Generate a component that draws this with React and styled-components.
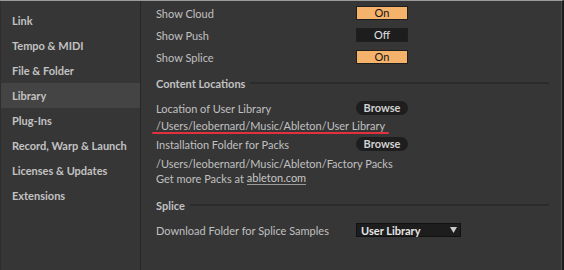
import React from "react";
import styled, { createGlobalStyle } from "styled-components";

const GlobalStyle = createGlobalStyle`
  html, body {
    margin: 0;
    padding: 0;
    background: #363636;
  }
  body {
    font-family: Lato, "Noto Sans", sans-serif;
    font-size: 11px;
    -webkit-font-smoothing: antialiased;
  }
`;

const Window = styled.div`
  width: 564px;
  height: 270px;
  box-sizing: border-box;
  display: flex;
  background: #363636;
  border-top: 1px solid #9a9a9a;
  border-right: 2px solid #1c1c1c;
  box-shadow: inset -1px 0 0 #4a4a4a;
  overflow: hidden;
`;

const Sidebar = styled.nav`
  width: 141px;
  flex: none;
  padding-top: 7px;
  border-right: 1px solid #272727;
  border-left: 1px solid #2e2e2e;
  box-sizing: border-box;
`;

const NavItem = styled.div`
  height: 25px;
  line-height: 25px;
  padding-left: 11px;
  font-weight: 700;
  color: #c2c2c2;
  background: ${(p) => (p.$active ? "#444444" : "transparent")};
  white-space: nowrap;
`;

const Content = styled.main`
  flex: 1;
  padding: 1px 13px 0 15px;
  display: flex;
  flex-direction: column;
  color: #c0c0c0;
`;

const Row = styled.div`
  height: ${(p) => p.$h || 22}px;
  display: grid;
  grid-template-columns: 200px auto;
  align-items: center;
  white-space: nowrap;
`;

const TextRow = styled.div`
  height: ${(p) => p.$h || 16}px;
  display: flex;
  align-items: center;
  white-space: nowrap;
`;

const SectionHeader = styled.div`
  height: ${(p) => p.$h}px;
  margin-top: ${(p) => p.$mt || 0}px;
  display: flex;
  align-items: center;
  gap: 5px;
  font-weight: 700;
  color: #c2c2c2;

  &::after {
    content: "";
    flex: 1;
    height: 2px;
    margin-top: -1px;
    background: #2b2b2b;
  }
`;

const Toggle = styled.div`
  width: 50px;
  height: 12px;
  line-height: 12px;
  text-align: center;
  border: 1px solid #1f1f1f;
  background: ${(p) => (p.$on ? "#f5b26b" : "#1d1d1d")};
  color: ${(p) => (p.$on ? "#151515" : "#e2e2e2")};
  font-size: 11px;
`;

const PillButton = styled.div`
  width: 52px;
  height: 14px;
  line-height: 14px;
  border-radius: 8px;
  background: #1e1e1e;
  color: #d2d2d2;
  text-align: center;
  font-weight: 700;
`;

const Path = styled.span`
  position: relative;
  display: inline-block;
`;

const RedMark = styled.span`
  position: absolute;
  left: -4px;
  right: -4px;
  bottom: -2px;
  height: 2px;
  border-radius: 1px;
  background: #e2303f;
`;

const Link = styled.span`
  margin-left: 3px;
  color: #c8c8c8;
  border-bottom: 1px solid #9a9a9a;
  line-height: 13px;
`;

const Select = styled.div`
  width: 96px;
  height: 12px;
  display: flex;
  align-items: center;
  justify-content: space-between;
  padding: 0 3px 0 4px;
  background: #1d1d1d;
  border: 1px solid #111111;
  color: #e6e6e6;
  font-weight: 700;
`;

const Caret = styled.svg`
  width: 7px;
  height: 6px;
  fill: #c8c8c8;
`;

const navItems = [
  "Link",
  "Tempo & MIDI",
  "File & Folder",
  "Library",
  "Plug-Ins",
  "Record, Warp & Launch",
  "Licenses & Updates",
  "Extensions",
];

const toggles = [
  ["Show Cloud", true],
  ["Show Push", false],
  ["Show Splice", true],
];

export default function App() {
  return (
    <>
      <GlobalStyle />
      <Window>
        <Sidebar>
          {navItems.map((item) => (
            <NavItem key={item} $active={item === "Library"}>
              {item}
            </NavItem>
          ))}
        </Sidebar>
        <Content>
          {toggles.map(([label, on]) => (
            <Row key={label}>
              <span>{label}</span>
              <Toggle $on={on}>{on ? "On" : "Off"}</Toggle>
            </Row>
          ))}
          <SectionHeader $h={30}>Content Locations</SectionHeader>
          <Row $h={20}>
            <span>Location of User Library</span>
            <PillButton>Browse</PillButton>
          </Row>
          <TextRow $h={14}>
            <Path>
              /Users/leobernard/Music/Ableton/User Library
              <RedMark />
            </Path>
          </TextRow>
          <Row $h={24}>
            <span>Installation Folder for Packs</span>
            <PillButton>Browse</PillButton>
          </Row>
          <TextRow $h={14}>/Users/leobernard/Music/Ableton/Factory Packs</TextRow>
          <TextRow>
            Get more Packs at<Link>ableton.com</Link>
          </TextRow>
          <SectionHeader $h={26} $mt={6}>
            Splice
          </SectionHeader>
          <Row $h={24}>
            <span>Download Folder for Splice Samples</span>
            <Select>
              <span>User Library</span>
              <Caret viewBox="0 0 7 6">
                <path d="M0 0 H7 L3.5 6 Z" />
              </Caret>
            </Select>
          </Row>
        </Content>
      </Window>
    </>
  );
}
